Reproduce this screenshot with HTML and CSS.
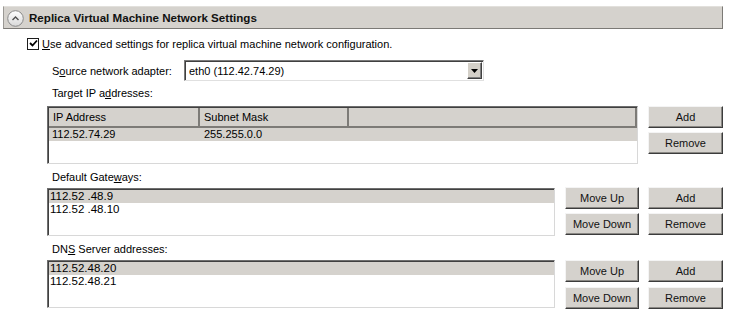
FILE: index.html
```html
<!DOCTYPE html>
<html>
<head>
<meta charset="utf-8">
<link rel="stylesheet" href="styles.css">
</head>
<body>
<div class="section-header">
  <svg class="collapse" width="17" height="17" viewBox="0 0 17 17">
    <defs>
      <linearGradient id="g" x1="0" y1="0" x2="0" y2="1">
        <stop offset="0" stop-color="#ffffff"/>
        <stop offset="1" stop-color="#d8d8d8"/>
      </linearGradient>
    </defs>
    <circle cx="8.5" cy="8.5" r="7.8" fill="url(#g)" stroke="#8a8a8a" stroke-width="1"/>
    <path d="M5.5 10 L8.5 7 L11.5 10" fill="none" stroke="#505050" stroke-width="1.4"/>
  </svg>
  <span class="title">Replica Virtual Machine Network Settings</span>
</div>

<div class="check-row">
  <span class="checkbox">
    <svg width="9" height="9" viewBox="0 0 9 9"><path d="M1 4 L3.5 6.5 L8 1.5" fill="none" stroke="#000" stroke-width="1.8"/></svg>
  </span>
  <span><u>U</u>se advanced settings for replica virtual machine network configuration.</span>
</div>

<div class="panel">
  <div class="source-row">
    <span class="label">S<u>o</u>urce network adapter:</span>
    <div class="combo">
      <span class="combo-text">eth0 (112.42.74.29)</span>
      <span class="combo-btn"><svg width="7" height="4" viewBox="0 0 7 4"><path d="M0 0 H7 L3.5 4 Z" fill="#000"/></svg></span>
    </div>
  </div>

  <div class="caption cap-target">Target IP a<u>d</u>dresses:</div>
  <div class="group group-target">
    <div class="grid-box">
      <div class="grid-head">
        <span class="col c1">IP Address</span>
        <span class="col c2">Subnet Mask</span>
        <span class="col c3"></span>
      </div>
      <div class="grid-row sel">
        <span class="cell c1">112.52.74.29</span>
        <span class="cell c2">255.255.0.0</span>
      </div>
    </div>
    <div class="btn-col">
      <button class="btn">Add</button>
      <button class="btn">Remove</button>
    </div>
  </div>

  <div class="caption cap-gw">Default Gate<u>w</u>ays:</div>
  <div class="group group-list">
    <div class="list-box">
      <div class="item sel">112.52 .48.9</div>
      <div class="item">112.52 .48.10</div>
    </div>
    <div class="btn-col move">
      <button class="btn">Move Up</button>
      <button class="btn">Move Down</button>
    </div>
    <div class="btn-col">
      <button class="btn">Add</button>
      <button class="btn">Remove</button>
    </div>
  </div>

  <div class="caption cap-dns">DN<u>S</u> Server addresses:</div>
  <div class="group group-list dns">
    <div class="list-box tall">
      <div class="item sel">112.52.48.20</div>
      <div class="item">112.52.48.21</div>
    </div>
    <div class="btn-col move">
      <button class="btn">Move Up</button>
      <button class="btn gap5">Move Down</button>
    </div>
    <div class="btn-col">
      <button class="btn">Add</button>
      <button class="btn gap5">Remove</button>
    </div>
  </div>
</div>
</body>
</html>
```

FILE: styles.css
```css
* { box-sizing: border-box; }

body {
  margin: 0;
  background: #ffffff;
  font-family: "Liberation Sans", Arial, sans-serif;
  font-size: 11px;
  color: #000;
  width: 731px;
  height: 320px;
  overflow: hidden;
}

u { text-decoration: underline; text-underline-offset: 1px; }

.section-header {
  margin: 6px 8px 0 3px;
  height: 23px;
  background: #d5d2cd;
  border: 1px solid #9a9894;
  border-top-color: #e2e0dc;
  border-right-color: #7c7a76;
  border-bottom-color: #7c7a76;
  display: flex;
  align-items: center;
  padding-left: 3px;
}

.collapse { flex: none; margin-top: 1px; }

.title {
  font-weight: bold;
  font-size: 11.6px;
  margin-left: 5px;
  color: #111;
}

.check-row {
  margin: 8px 0 0 27px;
  display: flex;
  align-items: center;
  height: 13px;
}

.checkbox {
  width: 12px;
  height: 12px;
  border: 1px solid #1c1c1c;
  background: #fff;
  display: flex;
  align-items: center;
  justify-content: center;
  margin-right: 3px;
}

.panel {
  margin-left: 47px;
  width: 676px;
}

.source-row {
  margin-top: 10px;
  display: flex;
  align-items: center;
  height: 21px;
}

.label { margin-left: 5px; width: 132px; }

.combo {
  width: 300px;
  height: 21px;
  border: 1px solid #7a7a7a;
  border-right-color: #e0e0e0;
  border-bottom-color: #e0e0e0;
  box-shadow: inset 1px 1px 0 #404040;
  display: flex;
  align-items: center;
  background: #fff;
  padding: 1px 1px 1px 0;
}

.combo-text { flex: 1; padding-left: 4px; }

.combo-btn {
  width: 15px;
  height: 17px;
  background: #d4d0c8;
  border: 1px solid #fff;
  border-right-color: #404040;
  border-bottom-color: #404040;
  box-shadow: inset -1px -1px 0 #808080;
  display: flex;
  align-items: center;
  justify-content: center;
}

.caption {
  margin-left: 5px;
  line-height: 13px;
  height: 13px;
}

.cap-target { margin-top: 6px; }
.cap-gw { margin-top: 7px; }
.cap-dns { margin-top: 7px; }

.group { display: flex; align-items: flex-start; }
.group-target { margin-top: 6px; }
.group-list { margin-top: 3px; }
.group-list.dns { margin-top: 4px; }

.grid-box {
  width: 591px;
  height: 58px;
  border: 1px solid #6f6f6f;
  border-right-color: #d8d8d8;
  border-bottom-color: #d8d8d8;
  box-shadow: inset 1px 1px 0 #404040;
  background: #fff;
  padding: 1px 0 0 1px;
  margin-right: 10px;
}

.grid-head {
  display: flex;
  height: 20px;
  background: #d5d2cd;
  border-bottom: 2px solid #7d7b77;
}

.col {
  height: 18px;
  line-height: 18px;
  padding-left: 4px;
  border-right: 2px solid #7d7b77;
}

.c1 { width: 151px; }
.c2 { width: 149px; }
.c3 { flex: 1; }

.grid-row {
  display: flex;
  height: 13px;
  line-height: 13px;
}

.cell { padding-left: 4px; }
.cell.c1 { padding-left: 3px; }

.sel { background: #d5d2cd; }

.list-box {
  width: 508px;
  height: 48px;
  margin-top: 1px;
  border: 1px solid #6f6f6f;
  border-right-color: #d8d8d8;
  border-bottom-color: #d8d8d8;
  box-shadow: inset 1px 1px 0 #404040;
  background: #fff;
  padding: 1px 0 0 1px;
  margin-right: 10px;
}

.list-box.tall { margin-top: 0; height: 48px; }

.item {
  height: 13px;
  line-height: 13px;
  padding-left: 1px;
  font-size: 11.5px;
}

.btn-col {
  display: flex;
  flex-direction: column;
  gap: 4px;
  width: 75px;
}

.btn-col.move { width: 74px; margin-right: 9px; }

.btn {
  font-family: inherit;
  font-size: 11px;
  height: 22px;
  width: 100%;
  margin: 0;
  padding: 0;
  background: #d5d2cd;
  color: #111;
  border: 1px solid #f4f4f4;
  border-right-color: #3c3c3c;
  border-bottom-color: #3c3c3c;
  box-shadow: inset -1px -1px 0 #8a8884;
  text-align: center;
}

.btn.gap5 { margin-top: 1px; }
```
